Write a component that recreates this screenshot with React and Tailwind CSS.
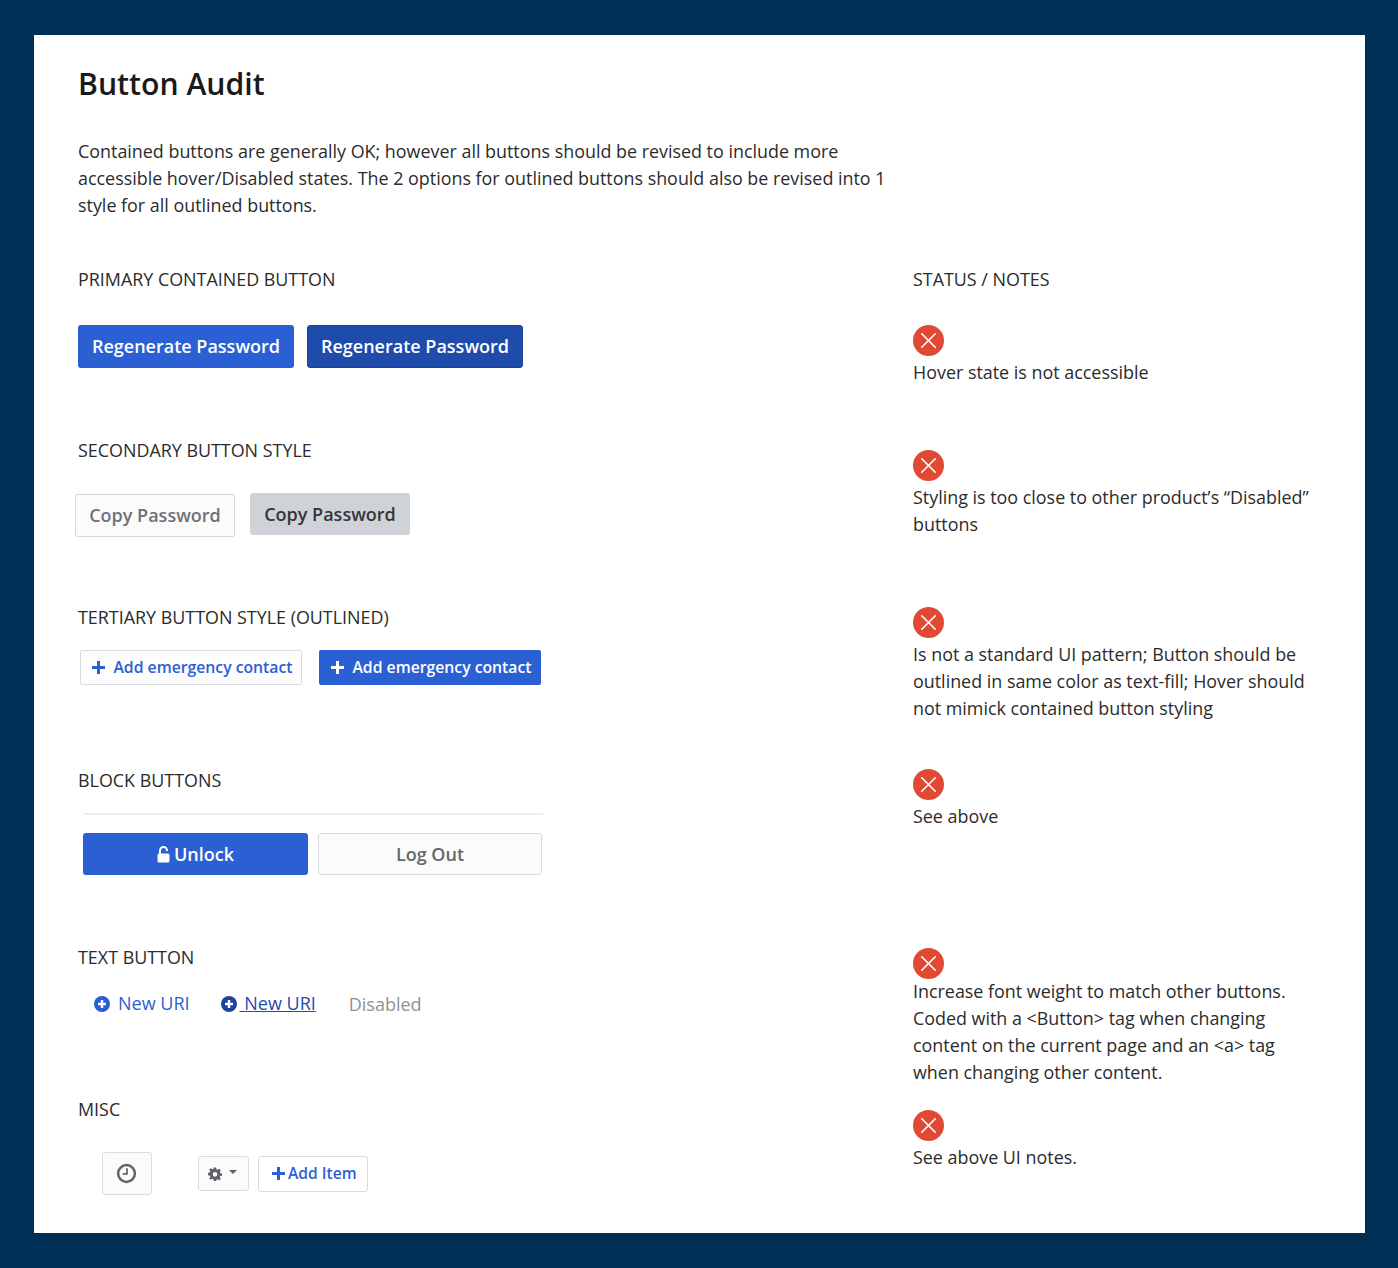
import { X } from "lucide-react";

const font = "font-['Open_Sans',sans-serif]";

function Label({ children, className = "" }) {
  return <div className={`h-[27px] text-[17.9px] leading-[27px] text-[#2b2b2b] ${className}`}>{children}</div>;
}

function Status({ className = "", tight, children }) {
  return (
    <div className={className}>
      <div className="flex h-[31px] w-[31px] items-center justify-center rounded-full bg-[#e04a35]">
        <X className="h-[27px] w-[27px] text-white" strokeWidth={1.4} />
      </div>
      <p className={`${tight ? "-mt-[1px]" : "mt-[3px]"} text-[17.9px] leading-[27px] text-[#2b2b2b]`}>{children}</p>
    </div>
  );
}

function PlusIcon() {
  return (
    <svg viewBox="0 0 13 13" className="h-[13px] w-[13px] shrink-0" fill="none" stroke="currentColor" strokeWidth="3">
      <path d="M6.5 0v13M0 6.5h13" />
    </svg>
  );
}

function LockIcon() {
  return (
    <svg viewBox="0 0 13 17" className="h-[17px] w-[13px] shrink-0">
      <path d="M3 8V4.5a3.5 3.5 0 0 1 7 0V5" fill="none" stroke="currentColor" strokeWidth="2" />
      <rect x="0.5" y="7.5" width="12" height="9" rx="1.5" fill="currentColor" />
    </svg>
  );
}

function CircleAdd({ dark }) {
  return (
    <svg viewBox="0 0 16 16" className="h-4 w-4 shrink-0">
      <circle cx="8" cy="8" r="8" fill={dark ? "#1f449f" : "#2b5fd4"} />
      <path d="M8 4v8M4 8h8" stroke="#fff" strokeWidth="2.4" />
    </svg>
  );
}

function ClockIcon() {
  return (
    <svg viewBox="0 0 22 22" className="h-[21px] w-[21px]" fill="none" stroke="#5f6368">
      <circle cx="11" cy="11" r="8.8" strokeWidth="2.6" />
      <path d="M11.5 5.5v6H7" strokeWidth="1.8" />
    </svg>
  );
}

function GearIcon() {
  return (
    <svg viewBox="0 0 24 24" className="h-[14px] w-[14px]" fill="#5f6368">
      <path
        fillRule="evenodd"
        d="M10 1h4l.6 3.1 1.9.8L19.2 3 22 5.8l-1.9 2.7.8 1.9L24 11v4l-3.1.6-.8 1.9 1.9 2.7-2.8 2.8-2.7-1.9-1.9.8L14 24h-4l-.6-3.1-1.9-.8L4.8 22 2 19.2l1.9-2.7-.8-1.9L0 14v-4l3.1-.6.8-1.9L2 4.8 4.8 2l2.7 1.9 1.9-.8L10 1zm2 7.5a4 4 0 1 0 0 8 4 4 0 0 0 0-8z"
      />
    </svg>
  );
}

export default function App() {
  return (
    <div className={`min-h-[1268px] bg-[#002f55] px-[34px] pt-[35px] ${font}`}>
      <div className="h-[1198px] w-[1331px] bg-white pl-[44px] pt-[28px]">
        <h1 className="text-[30.2px] font-semibold leading-[42px] text-[#1a1a1a]">Button Audit</h1>
        <p className="mt-[33px] w-[830px] text-[17.9px] leading-[27px] text-[#2b2b2b]">
          Contained buttons are generally OK; however all buttons should be revised to include more accessible
          hover/Disabled states. The 2 options for outlined buttons should also be revised into 1 style for all
          outlined buttons.
        </p>

        <div className="mt-[47px] flex">
          <div className="w-[835px] shrink-0">
            <Label>PRIMARY CONTAINED BUTTON</Label>
            <div className="mt-[32px] flex gap-[13px]">
              <button className="h-[43px] w-[216px] rounded-[3px] bg-[#2b5fd4] text-[18px] font-semibold text-white">
                Regenerate Password
              </button>
              <button className="h-[43px] w-[216px] rounded-[3px] border border-[#1c4499] bg-[#1f4bab] text-[18px] font-semibold text-white">
                Regenerate Password
              </button>
            </div>

            <Label className="mt-[69px]">SECONDARY BUTTON STYLE</Label>
            <div className="mt-[29px] flex items-start gap-[15px]">
              <button className="-ml-[3px] mt-[1px] h-[43px] w-[160px] rounded-[3px] border border-[#d5d9de] bg-[#fbfbfb] text-[18px] font-semibold text-[#6c7278] shadow-[0_0_1px_rgba(0,0,0,0.1)]">
                Copy Password
              </button>
              <button className="h-[42px] w-[160px] rounded-[3px] bg-[#cfd2d6] text-[18px] font-semibold text-[#333639]">
                Copy Password
              </button>
            </div>

            <Label className="mt-[67px]">TERTIARY BUTTON STYLE (OUTLINED)</Label>
            <div className="ml-[2px] mt-[19px] flex gap-[17px]">
              <button className="flex h-[35px] w-[222px] items-center justify-center gap-[8px] rounded-[2px] border border-[#d9dde2] bg-[#fdfdfd] pl-[3px] text-[15.75px] font-semibold text-[#2b5fd4]">
                <PlusIcon />
                Add emergency contact
              </button>
              <button className="flex h-[35px] w-[222px] items-center justify-center gap-[8px] rounded-[2px] bg-[#2b5fd4] pl-[3px] text-[15.75px] font-semibold text-white">
                <PlusIcon />
                Add emergency contact
              </button>
            </div>

            <Label className="mt-[82px]">BLOCK BUTTONS</Label>
            <div className="ml-[5px] mt-[19px] w-[460px] border-t-2 border-[#eeeeee] pt-[18px]">
              <div className="flex gap-[10px]">
                <button className="flex h-[42px] w-[225px] items-center justify-center gap-[4px] rounded-[3px] bg-[#2b5fd4] text-[18px] font-semibold text-white">
                  <LockIcon />
                  Unlock
                </button>
                <button className="h-[42px] w-[224px] rounded-[3px] border border-[#d9dde2] bg-[#fbfbfb] text-[18px] font-semibold text-[#62676c]">
                  Log Out
                </button>
              </div>
            </div>

            <Label className="mt-[69px]">TEXT BUTTON</Label>
            <div className="ml-[16px] mt-[18px] flex items-center text-[18px] leading-[27px]">
              <a className="flex items-center gap-[8px] text-[#2b5fd4]">
                <CircleAdd />
                New URI
              </a>
              <a className="ml-[31px] flex items-center text-[#1f4bab]">
                <CircleAdd dark />
                <span className="ml-[3px] underline">&nbsp;New URI</span>
              </a>
              <span className="ml-[33px] mt-[2px] text-[#8d9298]">Disabled</span>
            </div>

            <Label className="mt-[78px]">MISC</Label>
            <div className="ml-[24px] mt-[29px] flex items-center">
              <button className="flex h-[43px] w-[50px] items-center justify-center rounded-[3px] border border-[#d9dde2] bg-[#fbfbfb] pr-[2px]">
                <ClockIcon />
              </button>
              <button className="ml-[46px] flex h-[35px] w-[51px] items-center gap-[7px] rounded-[3px] border border-[#d9dde2] bg-[#fbfbfb] pl-[9px]">
                <GearIcon />
                <span className="mb-[3px] h-0 w-0 border-x-[4px] border-t-[4px] border-x-transparent border-t-[#5f6368]" />
              </button>
              <button className="ml-[9px] flex h-[36px] w-[110px] items-center gap-[3px] rounded-[3px] border border-[#d9dde2] bg-white pl-[13px] text-[15.6px] font-semibold text-[#2b5fd4]">
                <PlusIcon />
                Add Item
              </button>
            </div>
          </div>

          <div className="w-[410px]">
            <Label>STATUS / NOTES</Label>
            <Status className="mt-[32px]">Hover state is not accessible</Status>
            <Status className="mt-[64px]">
              Styling is too close to other product’s “Disabled” buttons
            </Status>
            <Status className="mt-[69px]">
              Is not a standard UI pattern; Button should be outlined in same color as text-fill; Hover should not
              mimick contained button styling
            </Status>
            <Status className="mt-[47px]">See above</Status>
            <Status className="mt-[118px]" tight>
              Increase font weight to match other buttons. Coded with a &lt;Button&gt; tag when changing content on
              the current page and an &lt;a&gt; tag when changing other content.
            </Status>
            <Status className="mt-[24px]">See above UI notes.</Status>
          </div>
        </div>
      </div>
    </div>
  );
}
